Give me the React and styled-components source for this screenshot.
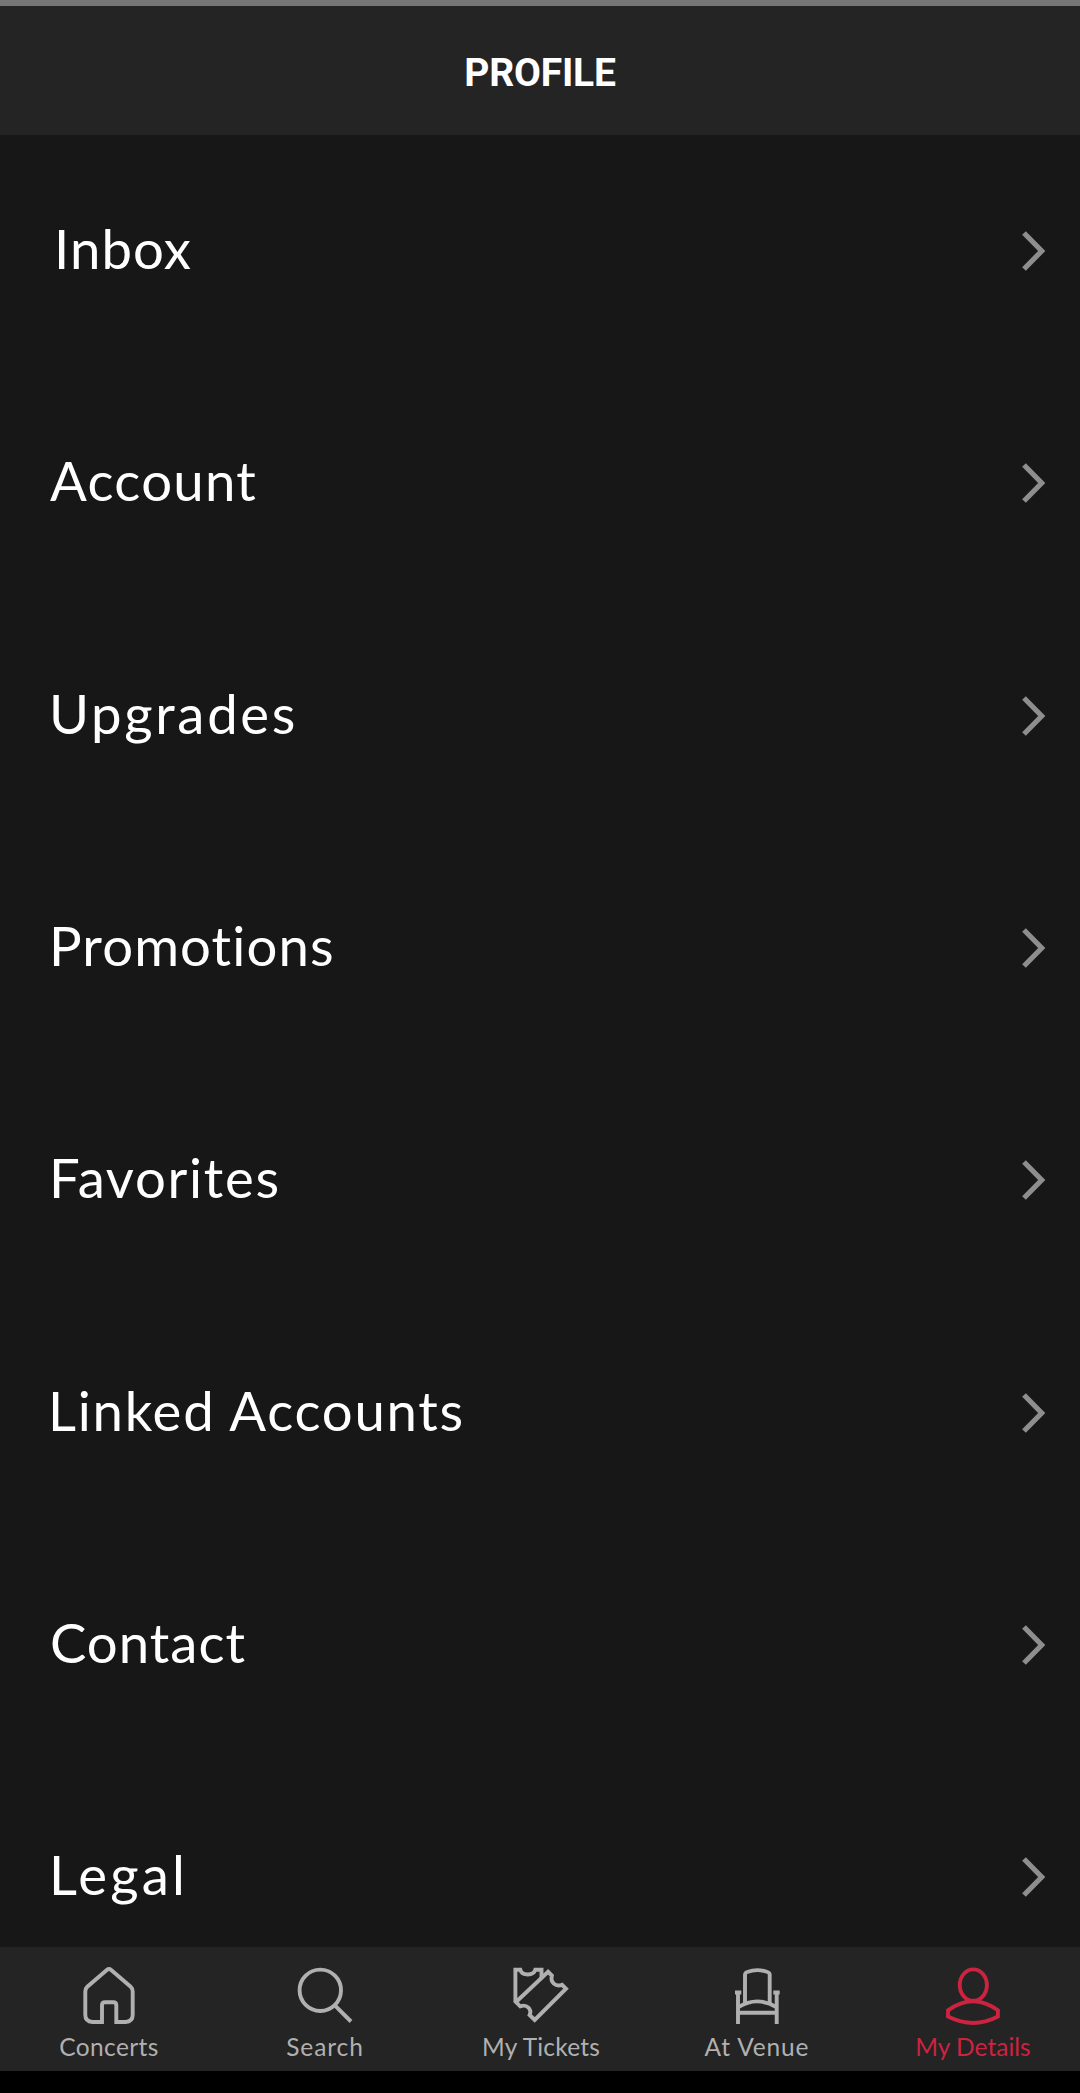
import React from 'react'
import styled, { createGlobalStyle } from 'styled-components'

const GlobalStyle = createGlobalStyle`
  body {
    margin: 0;
    background: #000000;
  }
`;

const Screen = styled.div`
  display: flex;
  flex-direction: column;
  width: 1080px;
  height: 2093px;
  overflow: hidden;
  background: #000000;
  font-family: Lato, "Open Sans", sans-serif;
  font-variant-ligatures: none;
`;

const Header = styled.header`
  display: flex;
  flex: none;
  align-items: center;
  justify-content: center;
  box-sizing: border-box;
  height: 135px;
  border-top: 6px solid #767676;
  background: #242424;
`;

const Title = styled.h1`
  margin: 5px 0 0;
  color: #ffffff;
  font-family: Roboto, sans-serif;
  font-size: 39px;
  font-weight: 700;
  line-height: 46px;
  letter-spacing: -0.2px;
`;

const Menu = styled.main`
  flex: 1;
  min-height: 0;
  overflow: hidden;
  background: #171717;
`;

const MenuRow = styled.div`
  display: flex;
  align-items: center;
  justify-content: space-between;
  box-sizing: border-box;
  height: 232.3px;
  padding: 0 30px 0 ${props => props.$indent}px;
`;

const MenuLabel = styled.span`
  margin-bottom: 6px;
  color: #ffffff;
  font-size: 54.5px;
  line-height: 64px;
  letter-spacing: ${props => props.$spacing}px;
  white-space: nowrap;
`;

const Chevron = styled.svg`
  flex: none;
  width: 30px;
  height: 42px;
  fill: none;
  stroke: #8e8e8e;
  stroke-width: 5.2;
`;

const TabBar = styled.nav`
  display: flex;
  flex: none;
  height: 124px;
  margin-bottom: 22px;
  background: #242424;
`;

const Tab = styled.div`
  display: flex;
  flex: 1;
  flex-direction: column;
  align-items: center;
  padding-top: 13px;
  color: ${props => (props.$active ? '#cb2340' : '#b0b0b0')};
`;

const TabIcon = styled.svg`
  width: 60px;
  height: 68px;
  fill: none;
  stroke: currentColor;
  stroke-width: 3.9;
`;

const TabLabel = styled.span`
  margin-top: 4px;
  padding-left: 2px;
  font-size: 24.5px;
  line-height: 30px;
  letter-spacing: ${props => props.$spacing}px;
  white-space: nowrap;
`;

const HomeIcon = () => (
  <TabIcon viewBox="0 0 60 68">
    <path d="M24 62H14.5Q7.3 61.5 7.3 55V31.5Q7.3 28.6 9.3 26.8L28.8 10Q31 8.2 33.2 10L52.7 26.8Q54.7 28.6 54.7 31.5V55Q54.7 61.5 47.5 62H38.3V45Q38.3 42.2 35.3 42.2H27Q24 42.2 24 45Z" />
  </TabIcon>
);

const SearchIcon = () => (
  <TabIcon viewBox="0 0 60 68">
    <circle cx="26.3" cy="30.3" r="20.7" />
    <path d="M40.8 45.3L57 61.5" />
  </TabIcon>
);

const TicketsIcon = () => (
  <TabIcon viewBox="0 0 60 68">
    <path d="M31.5 18V9.7H25.3C23.5 16 12 16 10.3 9.7H5.4V42" />
    <path d="M6 42L38.1 11.8L41.9 15.6C40 22.5 45.5 27 52 24.8L56 28.7L24.7 60L19.6 55C22.2 49.3 17 43.8 10.2 46.3Z" />
  </TabIcon>
);

const ChairIcon = () => (
  <TabIcon viewBox="0 0 60 68">
    <path d="M19 43.5V14.5Q19.3 12.6 21.3 12Q31.3 8.3 41.5 12Q43.5 12.6 43.7 14.5V43.5" />
    <path d="M9 32.5H15.3M47.3 32.5H53.7M12 32.5V64M50.7 32.5V64M12 52.8H50.7M12 47.3Q31.3 35.5 50.7 47.3" />
  </TabIcon>
);

const PersonIcon = () => (
  <TabIcon viewBox="0 0 60 68">
    <ellipse cx="31.3" cy="25.1" rx="13.6" ry="15.7" />
    <path d="M6 50.3Q31.3 32 55.9 50.3V56.6Q31.3 69.5 6 56.6Z" />
  </TabIcon>
);

const items = [
  { label: 'Inbox', indent: 54, spacing: 1.1 },
  { label: 'Account', indent: 50, spacing: 1.3 },
  { label: 'Upgrades', indent: 49, spacing: 2.7 },
  { label: 'Promotions', indent: 49, spacing: 1.1 },
  { label: 'Favorites', indent: 49, spacing: 1.7 },
  { label: 'Linked Accounts', indent: 48, spacing: 1.75 },
  { label: 'Contact', indent: 50, spacing: 1 },
  { label: 'Legal', indent: 49, spacing: 3.2 },
];

const tabs = [
  { label: 'Concerts', Icon: HomeIcon, spacing: 0.4 },
  { label: 'Search', Icon: SearchIcon, spacing: 0.9 },
  { label: 'My Tickets', Icon: TicketsIcon, spacing: 0.2 },
  { label: 'At Venue', Icon: ChairIcon, spacing: 0.85 },
  { label: 'My Details', Icon: PersonIcon, spacing: 0, active: true },
];

const App = () => {
  return (
    <Screen>
      <GlobalStyle />
      <Header>
        <Title>PROFILE</Title>
      </Header>
      <Menu>
        {items.map(item => (
          <MenuRow key={item.label} $indent={item.indent}>
            <MenuLabel $spacing={item.spacing}>{item.label}</MenuLabel>
            <Chevron viewBox="0 0 30 42">
              <path d="M4 3L21.7 21L4 39" />
            </Chevron>
          </MenuRow>
        ))}
      </Menu>
      <TabBar>
        {tabs.map(({ label, Icon, spacing, active }) => (
          <Tab key={label} $active={active}>
            <Icon />
            <TabLabel $spacing={spacing}>{label}</TabLabel>
          </Tab>
        ))}
      </TabBar>
    </Screen>
  )
}

export default App
